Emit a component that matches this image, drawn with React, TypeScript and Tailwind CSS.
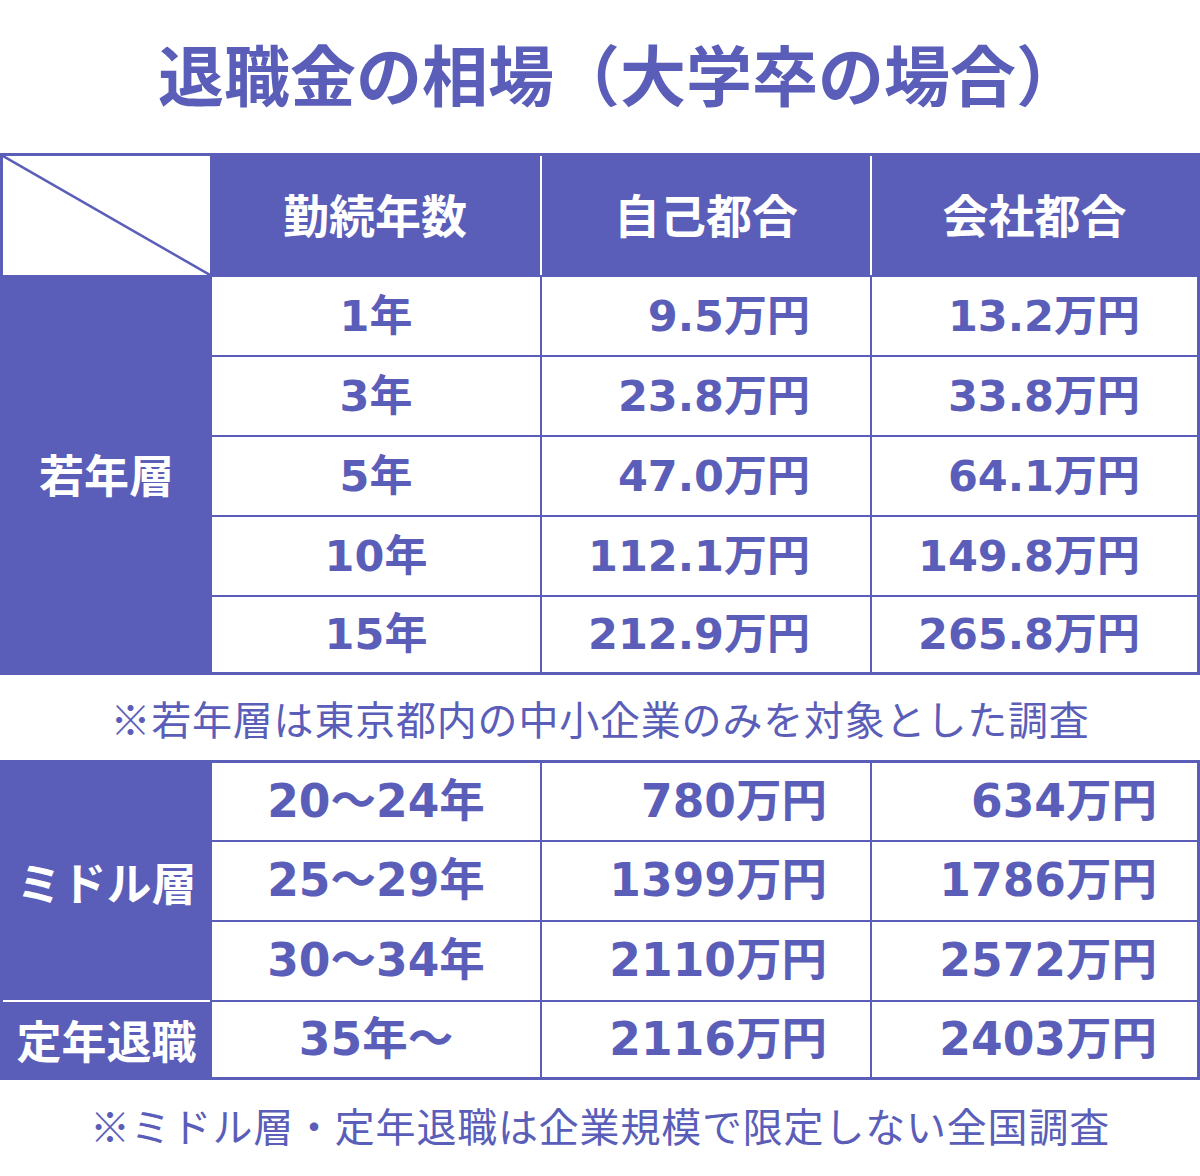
const purple = "#5a5eb8";

const young = [
  ["1年", "9.5万円", "13.2万円"],
  ["3年", "23.8万円", "33.8万円"],
  ["5年", "47.0万円", "64.1万円"],
  ["10年", "112.1万円", "149.8万円"],
  ["15年", "212.9万円", "265.8万円"],
];

const middle = [
  ["20～24年", "780万円", "634万円"],
  ["25～29年", "1399万円", "1786万円"],
  ["30～34年", "2110万円", "2572万円"],
  ["35年～", "2116万円", "2403万円"],
];

const numFont = "font-['DejaVu_Sans','Noto_Sans_CJK_JP',sans-serif] font-bold";
const jpFont = "font-['Noto_Sans_CJK_JP',sans-serif]";

function Rows({ rows, heights, wide }: { rows: string[][]; heights: number[]; wide: boolean }) {
  const size = wide ? "text-[45.5px]" : "text-[43px]";
  return (
    <div className="flex-1 flex flex-col gap-[2px] pl-[2px]">
      {rows.map((r, i) => (
        <div key={i} className="flex gap-[2px]" style={{ height: heights[i] }}>
          <div className={`w-[328px] bg-white flex items-center justify-center leading-none text-[#5a5eb8] ${size} ${numFont}`}>
            {r[0]}
          </div>
          <div
            className={`w-[328px] bg-white flex items-center justify-end leading-none text-[#5a5eb8] ${size} ${numFont} ${
              wide ? "pr-[43px]" : "pr-[60px]"
            }`}
          >
            {r[1]}
          </div>
          <div
            className={`flex-1 bg-white flex items-center justify-end leading-none text-[#5a5eb8] ${size} ${numFont} ${
              wide ? "pr-[40px]" : "pr-[57px]"
            }`}
          >
            {r[2]}
          </div>
        </div>
      ))}
    </div>
  );
}

export default function App() {
  return (
    <div className="w-[1200px] h-[1176px] bg-white flex flex-col">
      <div className={`h-[153px] pb-[10px] pl-[40px] flex items-center justify-center text-[66px] font-bold text-[#5a5eb8] leading-none ${jpFont}`}>
        退職金の相場（大学卒の場合）
      </div>

      {/* table 1 */}
      <div className="border-[3px] border-[#5a5eb8] bg-[#5a5eb8]">
        <div className="flex h-[119px]">
          <div className="w-[207px] bg-white relative">
            <svg className="absolute inset-0 w-full h-full" preserveAspectRatio="none" viewBox="0 0 207 119">
              <line x1="0" y1="0" x2="207" y2="119" stroke={purple} strokeWidth="2.5" />
            </svg>
          </div>
          <div className={`w-[330px] pb-[4px] flex items-center justify-center text-white text-[46px] font-bold ${jpFont}`}>勤続年数</div>
          <div className={`w-[330px] pb-[4px] border-l-2 border-white flex items-center justify-center text-white text-[46px] font-bold ${jpFont}`}>
            自己都合
          </div>
          <div className={`flex-1 pb-[4px] border-l-2 border-white flex items-center justify-center text-white text-[46px] font-bold ${jpFont}`}>
            会社都合
          </div>
        </div>
        <div className="flex">
          <div className={`w-[207px] flex items-center justify-center text-white text-[45px] font-bold ${jpFont}`}>若年層</div>
          <div className="flex-1 pt-[2px] flex">
            <Rows rows={young} heights={[78, 78, 78, 78, 75]} wide={false} />
          </div>
        </div>
      </div>

      <div className={`h-[85px] flex items-center justify-center text-[40px] text-[#5a5eb8] tracking-[0.8px] ${jpFont}`}>
        ※若年層は東京都内の中小企業のみを対象とした調査
      </div>

      {/* table 2 */}
      <div className="border-[3px] border-[#5a5eb8] bg-[#5a5eb8] flex">
        <div className="w-[207px] flex flex-col">
          <div className={`h-[237px] flex items-center justify-center text-white text-[45px] font-bold ${jpFont}`}>ミドル層</div>
          <div className="h-[2px] bg-white" />
          <div className={`flex-1 flex items-center justify-center text-white text-[45px] font-bold ${jpFont}`}>定年退職</div>
        </div>
        <Rows rows={middle} heights={[77, 78, 78, 75]} wide={true} />
      </div>

      <div className={`h-[90px] flex items-center justify-center text-[40px] text-[#5a5eb8] tracking-[0.8px] ${jpFont}`}>
        ※ミドル層・定年退職は企業規模で限定しない全国調査
      </div>
    </div>
  );
}
